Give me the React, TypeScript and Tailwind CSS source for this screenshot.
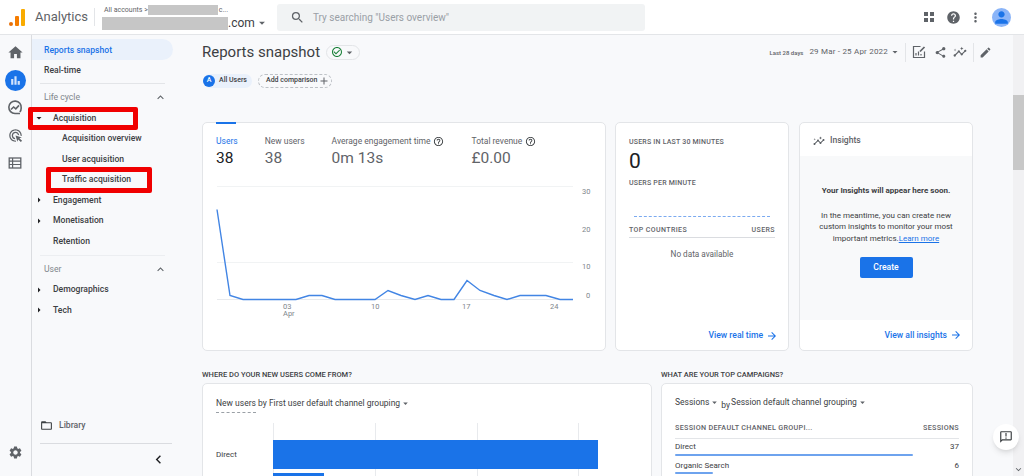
import {
  MdAdd,
  MdArrowDropDown,
  MdArrowForward,
  MdArrowRight,
  MdBarChart,
  MdCheckCircleOutline,
  MdChevronLeft,
  MdEdit,
  MdExpandLess,
  MdExpandMore,
  MdFolderOpen,
  MdHelp,
  MdHelpOutline,
  MdHome,
  MdInsights,
  MdMoreVert,
  MdOutlineAdsClick,
  MdOutlineAnnouncement,
  MdPerson,
  MdSearch,
  MdSettings,
  MdShare,
} from "react-icons/md";

const linePoints =
  "0,23 13,109 26,113 39,113 53,113 66,113 79,113 92,109 105,109 118,113 132,113 145,113 158,113 171,104 184,109 198,113 211,109 224,113 237,113 250,94 263,104 277,109 290,113 303,109 316,109 329,109 343,113 356,113";

const Logo = () => (
  <div className="flex h-[17px] items-end gap-[2px]">
    <div className="h-[4px] w-[4px] rounded-full bg-[#e8710a]" />
    <div className="h-[10px] w-[4px] rounded-[1px] bg-[#f57c00]" />
    <div className="h-[17px] w-[4px] rounded-[1px] bg-[#f9ab00]" />
  </div>
);

const AppsIcon = () => (
  <div className="grid grid-cols-2 gap-[2px]">
    <div className="h-[4px] w-[4px] bg-[#5f6368]" />
    <div className="h-[4px] w-[4px] bg-[#5f6368]" />
    <div className="h-[4px] w-[4px] bg-[#5f6368]" />
    <div className="h-[4px] w-[4px] bg-[#5f6368]" />
  </div>
);

const ExploreIcon = () => (
  <svg width="16" height="16" viewBox="0 0 16 16" fill="none" stroke="#5f6368" strokeWidth="1.6" className="mt-[9px]">
    <path d="M13 13.5H8A6.2 6.2 0 1 1 14.2 8c0 1.6-.5 3-1.4 4" />
    <path d="M4 9.5 6.6 7l2.2 1.8L12 5.4" />
  </svg>
);

const ReportListIcon = () => (
  <svg width="14" height="14" viewBox="0 0 14 14" className="mt-[13px]">
    <rect x="1.2" y="2" width="11.6" height="10" fill="none" stroke="#5f6368" strokeWidth="1.3" />
    <path d="M1 5.2h12M1 8.5h12M4.6 2v10" stroke="#5f6368" strokeWidth="1.2" />
  </svg>
);

const CustomizeIcon = () => (
  <svg width="14" height="14" viewBox="0 0 14 14" fill="none" stroke="#5f6368" className="ml-[6px]">
    <path d="M12.5 6.5v6h-11v-11h7" strokeWidth="1.2" />
    <path d="M4 10.5V8M6.5 10.5V6.5M9 10.5V9" strokeWidth="1.2" />
    <path d="M8 6.5 12.5 2" strokeWidth="1.7" />
  </svg>
);

const Header = () => (
  <header className="flex h-[35px] shrink-0 items-center border-b border-[#e3e5e8] bg-white">
    <div className="ml-[9px] w-[26px]">
      <Logo />
    </div>
    <span className="w-[59px] text-[13px] text-[#5f6368]">Analytics</span>
    <div className="h-[18px] w-px bg-[#e3e5e8]" />
    <div className="ml-[7px] flex w-[175px] flex-col">
      <div className="flex h-[12px] items-center pl-[2px] text-[7px] text-[#5f6368]">
        <span>All accounts &gt;</span>
        <div className="h-[10px] w-[70px] bg-[#c6c6c6]" />
        <span className="ml-[1px]">c...</span>
      </div>
      <div className="flex h-[14px] items-center text-[12px] text-[#3c4043]">
        <div className="h-[13px] w-[126px] bg-[#c6c6c6]" />
        <span>.com</span>
        <MdArrowDropDown className="text-[14px] text-[#5f6368]" />
      </div>
    </div>
    <div className="flex h-[27px] w-[368px] items-center rounded-[3px] bg-[#f1f3f4] pl-[13px] text-[10px] text-[#9aa0a6]">
      <MdSearch className="mr-[8px] text-[15px] text-[#5f6368]" />
      <span>Try searching "Users overview"</span>
    </div>
    <div className="ml-auto flex items-center pr-[13px]">
      <AppsIcon />
      <MdHelp className="ml-[12px] text-[15px] text-[#5f6368]" />
      <MdMoreVert className="ml-[7px] text-[15px] text-[#5f6368]" />
      <div className="ml-[9px] flex h-[19px] w-[19px] items-end justify-center overflow-hidden rounded-full bg-[#8ab4f8]">
        <MdPerson className="text-[19px] text-[#1a73e8]" />
      </div>
    </div>
  </header>
);

const Rail = () => (
  <aside className="flex w-[32px] shrink-0 flex-col items-center border-r border-[#dadce0] bg-[#f8f9fb] pt-[9px] pr-px">
    <MdHome className="text-[17px] text-[#5f6368]" />
    <div className="mt-[9px] flex h-[21px] w-[21px] items-center justify-center rounded-full bg-[#1a73e8]">
      <MdBarChart className="text-[13px] text-[#d2e3fc]" />
    </div>
    <ExploreIcon />
    <MdOutlineAdsClick className="mt-[12px] text-[15px] text-[#5f6368]" />
    <ReportListIcon />
    <MdSettings className="mt-auto mb-[16px] text-[15px] text-[#5f6368]" />
  </aside>
);

type NavRowProps = { label: string; arrow?: "open" | "closed"; sub?: boolean; mark?: string };

const NavRow = ({ label, arrow, sub, mark }: NavRowProps) => (
  <div className="relative flex h-[20.5px] items-center text-[8.6px] font-medium text-[#3c4043]">
    <span className="flex w-[13px] shrink-0 justify-end">
      {arrow === "open" && <MdArrowDropDown className="text-[12px] text-[#202124]" />}
      {arrow === "closed" && <MdArrowRight className="text-[12px] text-[#202124]" />}
    </span>
    <span className={sub ? "ml-[17px]" : "ml-[8px]"}>{label}</span>
    {mark && <div className={mark} />}
  </div>
);

const SectionLabel = ({ label }: { label: string }) => (
  <div className="flex h-[21px] items-center justify-between pr-[23px] pl-[12px] text-[8.6px] text-[#80868b]">
    <span>{label}</span>
    <MdExpandLess className="text-[13px] text-[#5f6368]" />
  </div>
);

const SideNav = () => (
  <nav className="flex w-[158px] shrink-0 flex-col bg-[#f8f9fb] pt-[4px]">
    <div className="flex h-[21px] w-[141px] items-center rounded-r-full bg-[#eaf1fb] pt-px pl-[12px] text-[8.6px] font-medium text-[#1a73e8]">
      Reports snapshot
    </div>
    <div className="flex h-[21px] items-center pl-[12px] text-[8.6px] font-medium text-[#3c4043]">Real-time</div>
    <div className="mt-[2px] mr-[25px] mb-[3px] ml-[8px] h-px bg-[#e3e5e8]" />
    <SectionLabel label="Life cycle" />
    <NavRow
      label="Acquisition"
      arrow="open"
      mark="absolute top-[-1px] left-[-4px] h-[23px] w-[110px] rounded-[2px] border-[5px] border-[#f00000]"
    />
    <NavRow label="Acquisition overview" sub />
    <NavRow label="User acquisition" sub />
    <NavRow
      label="Traffic acquisition"
      sub
      mark="absolute top-[-3px] left-[14px] h-[26px] w-[106px] rounded-[2px] border-[5px] border-[#f00000]"
    />
    <NavRow label="Engagement" arrow="closed" />
    <NavRow label="Monetisation" arrow="closed" />
    <NavRow label="Retention" />
    <div className="mt-[3px] mr-[25px] mb-[3px] ml-[8px] h-px bg-[#eceef1]" />
    <SectionLabel label="User" />
    <NavRow label="Demographics" arrow="closed" />
    <NavRow label="Tech" arrow="closed" />
    <div className="mt-auto flex items-center pl-[8px] text-[8.6px] font-medium text-[#5f6368]">
      <MdFolderOpen className="text-[13px] text-[#3c4043]" />
      <span className="ml-[6px]">Library</span>
    </div>
    <div className="mt-[11px] mr-[18px] ml-[8px] h-px bg-[#dadce0]" />
    <div className="flex h-[32px] items-center justify-end pr-[23px] pb-[2px]">
      <MdChevronLeft className="text-[17px] text-[#202124]" />
    </div>
  </nav>
);

type MetricProps = { label: string; value: string; active?: boolean; help?: boolean };

const Metric = ({ label, value, active, help }: MetricProps) => (
  <div className="flex flex-col">
    <div className={`flex h-[12px] items-center text-[8.5px] ${active ? "text-[#1a73e8]" : "text-[#5f6368]"}`}>
      {label}
      {help && <MdHelpOutline className="ml-[3px] text-[11px] text-[#3c4043]" />}
    </div>
    <div className={`mt-[1px] text-[15.5px] leading-[20px] ${active ? "text-[#202124]" : "text-[#5f6368]"}`}>{value}</div>
  </div>
);

const LineChart = () => (
  <svg width="392" height="142" className="mt-[9px] -ml-[2px] block">
    <g stroke="#f1f3f4" strokeWidth="1">
      <line x1="3" x2="359" y1="9.5" y2="9.5" />
      <line x1="3" x2="359" y1="85.5" y2="85.5" />
      <line x1="3" x2="359" y1="122.5" y2="122.5" stroke="#e8eaed" />
    </g>
    <polyline points={linePoints} fill="none" stroke="#4285e4" strokeWidth="1.4" transform="translate(3 9.5)" />
    <g fontSize="7.5" fill="#80868b" fontFamily="Roboto, sans-serif">
      <text x="368" y="17">30</text>
      <text x="368" y="55">20</text>
      <text x="368" y="92">10</text>
      <text x="372" y="121">0</text>
      <text x="69" y="132">03</text>
      <text x="157" y="132">10</text>
      <text x="248" y="132">17</text>
      <text x="336" y="132">24</text>
      <text x="69" y="139">Apr</text>
    </g>
  </svg>
);

const UsersCard = () => (
  <section className="relative flex w-[404px] shrink-0 flex-col rounded-[5px] border border-[#e3e5e8] bg-white px-[13px] pt-[12px]">
    <div className="absolute top-[-1px] left-[13px] h-[2px] w-[20px] bg-[#1a73e8]" />
    <div className="flex gap-[27px]">
      <Metric label="Users" value="38" active />
      <Metric label="New users" value="38" />
      <Metric label="Average engagement time" value="0m 13s" help />
      <Metric label="Total revenue" value="£0.00" help />
    </div>
    <LineChart />
  </section>
);

const FooterLink = ({ label }: { label: string }) => (
  <div className="flex items-center justify-end text-[8.6px] font-medium text-[#1a73e8]">
    {label}
    <MdArrowForward className="ml-[3px] text-[12px]" />
  </div>
);

const RealtimeCard = () => (
  <section className="flex w-[174px] shrink-0 flex-col rounded-[5px] border border-[#e3e5e8] bg-white px-[13px] pt-[13px] pb-[8px]">
    <div className="text-[7px] leading-[13px] font-medium tracking-[0.2px] text-[#5f6368]">USERS IN LAST 30 MINUTES</div>
    <div className="mt-[1px] text-[21px] leading-[23px] text-[#202124]">0</div>
    <div className="mt-[5px] text-[7px] leading-[11px] font-medium tracking-[0.2px] text-[#5f6368]">USERS PER MINUTE</div>
    <div className="mx-[5px] mt-[27px] border-t border-dashed border-[#7baaf0]" />
    <div className="mt-[8px] flex justify-between border-b border-[#dadce0] pb-[1px] text-[7px] font-medium tracking-[0.4px] text-[#5f6368]">
      <span>TOP COUNTRIES</span>
      <span>USERS</span>
    </div>
    <div className="mt-[10px] text-center text-[8.2px] text-[#5f6368]">No data available</div>
    <div className="mt-auto -mr-[3px]">
      <FooterLink label="View real time" />
    </div>
  </section>
);

const InsightsCard = () => (
  <section className="flex w-[174px] shrink-0 flex-col overflow-hidden rounded-[5px] border border-[#e3e5e8] bg-white">
    <div className="flex h-[33px] items-center pt-[2px] pl-[13px] text-[8.6px] font-medium text-[#5f6368]">
      <MdInsights className="text-[12px]" />
      <span className="ml-[5px]">Insights</span>
    </div>
    <div className="flex h-[164px] flex-col items-center bg-[#f8f9fa] pt-[29px] text-center text-[8px] leading-[11.5px] text-[#3c4043]">
      <div className="font-bold">Your Insights will appear here soon.</div>
      <div className="mt-[13px]">In the meantime, you can create new</div>
      <div>custom insights to monitor your most</div>
      <div className="flex">
        <span>important metrics.</span>
        <span className="text-[#1a73e8] underline">Learn more</span>
      </div>
      <div className="mt-[13px] flex h-[21px] w-[53px] items-center justify-center rounded-[2px] bg-[#1a73e8] text-[8.6px] font-medium text-white">
        Create
      </div>
    </div>
    <div className="flex flex-1 items-center justify-end pr-[10px]">
      <FooterLink label="View all insights" />
    </div>
  </section>
);

const SourcesCard = () => (
  <div className="flex w-[450px] shrink-0 flex-col">
    <div className="h-[15px] pt-px text-[7.5px] leading-[15px] font-medium text-[#3c4043]">WHERE DO YOUR NEW USERS COME FROM?</div>
    <section className="mt-[2px] flex h-[110px] flex-col rounded-t-[5px] border border-[#e3e5e8] bg-white pt-[13px] pl-[13px]">
      <div className="flex h-[13px] items-center text-[8.5px] text-[#3c4043]">
        <span>New users by First user default channel grouping</span>
        <MdArrowDropDown className="text-[11px] text-[#5f6368]" />
      </div>
      <div className="h-[3px] w-[40px] border-b border-dashed border-[#9aa0a6]" />
      <div className="mt-[10px] flex">
        <span className="mt-[26px] w-[57px] text-[8px] text-[#3c4043]">Direct</span>
        <svg width="327" height="60" className="block">
          <g stroke="#e8eaed">
            <line x1="0.5" x2="0.5" y1="0" y2="60" />
            <line x1="102.5" x2="102.5" y1="0" y2="60" />
            <line x1="204.5" x2="204.5" y1="0" y2="60" />
            <line x1="305.5" x2="305.5" y1="0" y2="60" />
          </g>
          <rect x="0" y="17" width="325" height="29" fill="#1a73e8" />
          <rect x="0" y="50" width="51" height="10" fill="#1a73e8" />
        </svg>
      </div>
    </section>
  </div>
);

const CampaignRow = ({ label, value, bar }: { label: string; value: string; bar: string }) => (
  <div className="h-[18.5px] pt-[3px]">
    <div className="flex h-[11px] items-center justify-between text-[8px] text-[#3c4043]">
      <span>{label}</span>
      <span>{value}</span>
    </div>
    <div className={`mt-[1px] h-[2px] rounded-full bg-[#6ea3ee] ${bar}`} />
  </div>
);

const CampaignsCard = () => (
  <div className="flex w-[312px] shrink-0 flex-col">
    <div className="h-[15px] pt-px text-[7.5px] leading-[15px] font-medium text-[#3c4043]">WHAT ARE YOUR TOP CAMPAIGNS?</div>
    <section className="mt-[2px] flex h-[110px] flex-col rounded-t-[5px] border border-[#e3e5e8] bg-white px-[13px] pt-[12px]">
      <div className="flex h-[13px] items-center text-[8.5px] text-[#3c4043]">
        <span>Sessions</span>
        <MdArrowDropDown className="text-[11px] text-[#5f6368]" />
        <span className="mx-[1px] mt-[6px]">by</span>
        <span>Session default channel grouping</span>
        <MdArrowDropDown className="text-[11px] text-[#5f6368]" />
      </div>
      <div className="mt-[14px] flex justify-between border-b border-[#e3e5e8] pb-[4px] text-[7.2px] font-medium tracking-[0.3px] text-[#5f6368]">
        <span>SESSION DEFAULT CHANNEL GROUPI...</span>
        <span>SESSIONS</span>
      </div>
      <CampaignRow label="Direct" value="37" bar="w-[238px]" />
      <CampaignRow label="Organic Search" value="6" bar="w-[38px]" />
    </section>
  </div>
);

const Toolbar = () => (
  <div className="-mr-[25px] flex h-[43px] shrink-0 flex-col">
    <div className="flex h-[24px] items-center">
      <h1 className="text-[15px] text-[#3c4043]">Reports snapshot</h1>
      <div className="ml-[6px] flex h-[15px] w-[34px] items-center justify-center rounded-full border border-[#e3e5e8]">
        <MdCheckCircleOutline className="text-[12px] text-[#188038]" />
        <MdArrowDropDown className="text-[13px] text-[#5f6368]" />
      </div>
      <span className="ml-auto text-[6px] font-medium text-[#5f6368]">Last 28 days</span>
      <span className="ml-[6px] text-[8px] tracking-[0.2px] text-[#5f6368]">29 Mar - 25 Apr 2022</span>
      <MdArrowDropDown className="ml-[1px] text-[12px] text-[#5f6368]" />
      <div className="ml-[4px] h-[19px] w-px bg-[#e3e5e8]" />
      <CustomizeIcon />
      <MdShare className="ml-[8px] text-[13px] text-[#5f6368]" />
      <MdInsights className="ml-[6px] text-[14px] text-[#5f6368]" />
      <div className="ml-[6px] h-[19px] w-px bg-[#e3e5e8]" />
      <MdEdit className="ml-[5px] mr-[6px] text-[13px] text-[#5f6368]" />
    </div>
    <div className="mt-[10px] flex h-[14px] items-center pl-px">
      <div className="flex h-[14px] w-[49px] items-center rounded-full bg-[#eaf1fb] text-[7px] font-medium text-[#3c4043]">
        <span className="flex h-[12px] w-[12px] items-center justify-center rounded-full bg-[#1a73e8] text-[7px] text-white">A</span>
        <span className="ml-[4px]">All Users</span>
      </div>
      <div className="ml-[6px] flex h-[14px] items-center rounded-full border border-dashed border-[#bdc1c6] pl-[7px] pr-[1px] text-[7px] font-medium text-[#3c4043]">
        Add comparison
        <MdAdd className="ml-[1px] text-[12px] text-[#5f6368]" />
      </div>
    </div>
  </div>
);

const Scrollbar = () => (
  <div className="flex w-[11px] shrink-0 flex-col bg-[#f1f1f3]">
    <div className="mt-[60px] h-[75px] bg-[#c8c8c8]" />
    <MdExpandMore className="mt-auto mb-[1px] text-[11px] text-[#5f6368]" />
  </div>
);

const App = () => (
  <div className="relative flex h-[476px] w-[1024px] flex-col overflow-hidden bg-[#f8f9fb] font-['Roboto',sans-serif]">
    <Header />
    <div className="flex min-h-0 flex-1">
      <Rail />
      <SideNav />
      <main className="flex min-w-0 flex-1 flex-col overflow-hidden pt-[6px] pr-[40px] pl-[12px]">
        <Toolbar />
        <div className="mt-[38px] flex h-[229px] shrink-0">
          <UsersCard />
          <div className="ml-[9px] flex h-[229px]">
            <RealtimeCard />
          </div>
          <div className="ml-[10px] flex h-[229px]">
            <InsightsCard />
          </div>
        </div>
        <div className="mt-[15px] flex gap-[9px]">
          <SourcesCard />
          <CampaignsCard />
        </div>
      </main>
      <Scrollbar />
    </div>
    <div className="absolute top-[424px] left-[993px] flex h-[26px] w-[26px] items-center justify-center rounded-full bg-white shadow-md">
      <MdOutlineAnnouncement className="text-[14px] text-[#3c4043]" />
    </div>
  </div>
);

export default App;
